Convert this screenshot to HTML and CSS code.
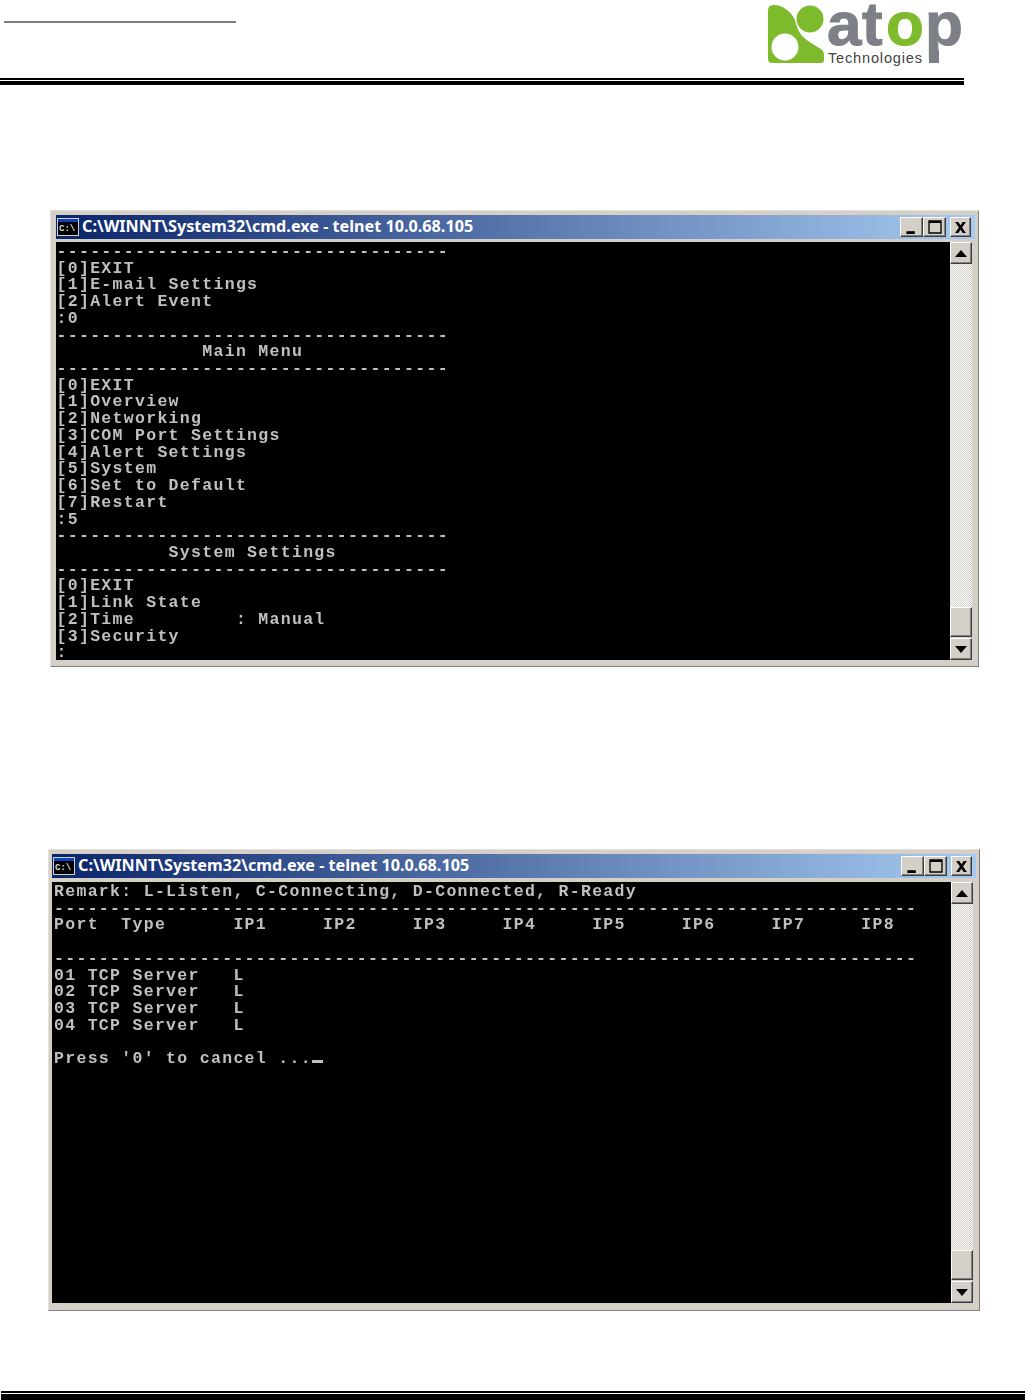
FILE: index.html
```html
<!DOCTYPE html>
<html lang="en">
<head>
<meta charset="utf-8">
<title>atop Technologies - telnet console</title>
<link rel="stylesheet" href="styles.css">
</head>
<body>
<header class="page-header">
  <div class="header-line"></div>
  <svg class="logo" viewBox="764 0 200 70" width="200" height="70" aria-label="atop Technologies">
    <path class="logo-green" d="M768 11 Q768 5 773 5 Q781 5 787 10 Q794 15 796 24 Q799 36 811 43 L821 49 Q824 51 824 55 L824 60 Q824 63 821 63 L772 63 Q768 63 768 59 Z"/>
    <circle class="logo-white" cx="785" cy="47" r="13.5"/>
    <circle class="logo-green" cx="810" cy="19" r="13.5"/>
    <rect class="logo-grey" x="929" y="50" width="10" height="13"/>
    <text class="logo-word" y="45"><tspan class="logo-grey" x="827">a</tspan><tspan class="logo-grey" x="862">t</tspan><tspan class="logo-green" x="886">o</tspan><tspan class="logo-grey" x="925">p</tspan></text>
    <text class="logo-sub" x="828" y="63">Technologies</text>
  </svg>
</header>
<div class="rule rule-top"></div>

<section class="window win-a">
  <div class="titlebar">
    <svg class="cmd-icon" viewBox="0 0 22 18" width="22" height="18"><rect x="0.5" y="0.5" width="21" height="17" fill="#000" stroke="#d4d0c8"/><rect x="1" y="1" width="20" height="3" fill="#1040c0"/><text x="2" y="13" class="cmd-icon-text">C:\</text></svg>
    <span class="title-text">C:\WINNT\System32\cmd.exe - telnet 10.0.68.105</span>
    <div class="win-buttons">
      <button class="btn"><svg viewBox="0 0 10 10" width="14" height="14"><rect x="1" y="8" width="6" height="2"/></svg></button>
      <button class="btn"><svg viewBox="0 0 12 12" width="16" height="16"><path d="M1 1h10v10H1z M2 3v7h8V3z" fill-rule="evenodd"/></svg></button>
      <button class="btn btn-close"><svg viewBox="0 0 12 12" width="13" height="13"><path d="M1 1h3l2 3 2-3h3L7.5 6 11 11H8L6 8l-2 3H1l3.500-5z"/></svg></button>
    </div>
  </div>
  <div class="console">
<pre class="term">-----------------------------------
[0]EXIT
[1]E-mail Settings
[2]Alert Event
:0
-----------------------------------
             Main Menu
-----------------------------------
[0]EXIT
[1]Overview
[2]Networking
[3]COM Port Settings
[4]Alert Settings
[5]System
[6]Set to Default
[7]Restart
:5
-----------------------------------
          System Settings
-----------------------------------
[0]EXIT
[1]Link State
[2]Time         : Manual
[3]Security
:</pre>
    <div class="scrollbar">
      <button class="scroll-btn"><svg viewBox="0 0 12 7" width="12" height="7"><path d="M6 0l6 7H0z"/></svg></button>
      <div class="track"></div>
      <div class="thumb"></div>
      <button class="scroll-btn"><svg viewBox="0 0 12 7" width="12" height="7"><path d="M6 7L0 0h12z"/></svg></button>
    </div>
  </div>
</section>

<section class="window win-b">
  <div class="titlebar">
    <svg class="cmd-icon" viewBox="0 0 22 18" width="22" height="18"><rect x="0.5" y="0.5" width="21" height="17" fill="#000" stroke="#d4d0c8"/><rect x="1" y="1" width="20" height="3" fill="#1040c0"/><text x="2" y="13" class="cmd-icon-text">C:\</text></svg>
    <span class="title-text">C:\WINNT\System32\cmd.exe - telnet 10.0.68.105</span>
    <div class="win-buttons">
      <button class="btn"><svg viewBox="0 0 10 10" width="14" height="14"><rect x="1" y="8" width="6" height="2"/></svg></button>
      <button class="btn"><svg viewBox="0 0 12 12" width="16" height="16"><path d="M1 1h10v10H1z M2 3v7h8V3z" fill-rule="evenodd"/></svg></button>
      <button class="btn btn-close"><svg viewBox="0 0 12 12" width="13" height="13"><path d="M1 1h3l2 3 2-3h3L7.5 6 11 11H8L6 8l-2 3H1l3.500-5z"/></svg></button>
    </div>
  </div>
  <div class="console">
<pre class="term">Remark: L-Listen, C-Connecting, D-Connected, R-Ready
-----------------------------------------------------------------------------
Port  Type      IP1     IP2     IP3     IP4     IP5     IP6     IP7     IP8

-----------------------------------------------------------------------------
01 TCP Server   L
02 TCP Server   L
03 TCP Server   L
04 TCP Server   L

Press '0' to cancel ...<span class="cursor"></span></pre>
    <div class="scrollbar">
      <button class="scroll-btn"><svg viewBox="0 0 12 7" width="12" height="7"><path d="M6 0l6 7H0z"/></svg></button>
      <div class="track"></div>
      <div class="thumb"></div>
      <button class="scroll-btn"><svg viewBox="0 0 12 7" width="12" height="7"><path d="M6 7L0 0h12z"/></svg></button>
    </div>
  </div>
</section>

<div class="rule rule-bottom"></div>
</body>
</html>
```
FILE: styles.css
```css
html, body { margin: 0; padding: 0; background: #fff; }
body { height: 1400px; overflow: hidden; font-family: "Liberation Sans", sans-serif; }

.page-header { width: 964px; height: 78px; display: flex; justify-content: space-between; align-items: flex-start; }
.header-line { width: 232px; height: 2px; margin: 21px 0 0 4px; background: #808080; }
.logo { display: block; }
.logo-green { fill: #7dbb2c; }
.logo-white { fill: #fff; }
.logo-grey { fill: #7e8087; }
.logo-word { font: bold 62px "Liberation Sans", sans-serif; stroke: currentColor; }
.logo-word .logo-grey { stroke: #7e8087; stroke-width: 1px; }
.logo-word .logo-green { stroke: #7dbb2c; stroke-width: 1px; }
.logo-sub { font: 14.6px "Liberation Sans", sans-serif; letter-spacing: .8px; fill: #444; }

.rule { border-top: 2px solid #000; position: relative; }
.rule::after { content: ""; display: block; background: #000; margin-top: 1px; }
.rule-top { width: 964px; }
.rule-top::after { height: 4px; }
.rule-bottom { margin-top: 80px; margin-left: 1px; }
.rule-bottom::after { height: 6px; }

.window { box-sizing: border-box; background: #d4d0c8; border: 1px solid; border-color: #e4e2dc #808080 #808080 #e4e2dc; }
.win-a { width: 929px; height: 457px; margin: 125px 0 0 50px; padding: 4px 3px 0 5px; }
.win-b { width: 932px; height: 462px; margin: 182px 0 0 48px; padding: 4px 3px 0 3px; }

.titlebar { height: 24px; display: flex; align-items: center; padding-left: 1px; background: linear-gradient(90deg, #0a246a, #a6caf0); }
.cmd-icon { flex: none; }
.cmd-icon-text { font: bold 9px "Liberation Mono", monospace; fill: #ddd; }
.title-text { margin: 0 0 2px 3px; color: #fff; font: bold 16.2px "Noto Sans", sans-serif; white-space: nowrap; }
.win-buttons { margin-left: auto; display: flex; margin-right: 4px; }

.btn, .scroll-btn { box-sizing: border-box; padding: 0; display: flex; align-items: center; justify-content: center; background: #d4d0c8; border: 1px solid; border-color: #fff #404040 #404040 #fff; box-shadow: inset -1px -1px 0 #808080; }
.btn { width: 23px; height: 20px; }
.btn-close { margin-left: 4px; width: 21px; }

.console { display: flex; height: 418px; margin: 3px 3px 0 0; }
.win-b .console { height: 421px; margin-top: 4px; }
.term { flex: 1; margin: 0; padding: 2px 0 0 .5px; background: #000; color: #c0c0c0; overflow: hidden; font: bold 16.5px/16.72px "Liberation Mono", monospace; letter-spacing: 1.31px; filter: blur(.3px); }
.win-b .term { padding: 2px 0 0 2px; }
.cursor { display: inline-block; width: 11px; height: 3px; background: #c0c0c0; }

.scrollbar { width: 22px; flex: none; display: flex; flex-direction: column; }
.scroll-btn { height: 22px; width: 22px; flex: none; }
.track { flex: 1; background-color: #e8e6e1; background-image: conic-gradient(#fff 25%, #d4d0c8 0 50%, #fff 0 75%, #d4d0c8 0); background-size: 2px 2px; }
.thumb { height: 30px; flex: none; margin-bottom: 1px; box-sizing: border-box; background: #d4d0c8; border: 1px solid; border-color: #fff #404040 #404040 #fff; box-shadow: inset -1px -1px 0 #808080; }
```
